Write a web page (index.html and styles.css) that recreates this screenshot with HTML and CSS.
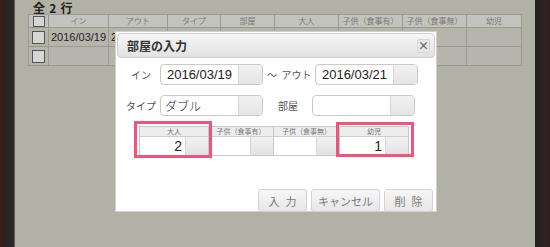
FILE: index.html
```html
<!DOCTYPE html>
<html lang="ja">
<head>
  <meta charset="UTF-8">
  <title>部屋の入力</title>
  <link rel="stylesheet" href="styles.css">
</head>
<body>
  <div class="frame">
    <div class="edge-left"></div>
    <main class="board">
      <div class="count">全 2 行</div>
      <table class="list">
        <tr class="head">
          <td class="c-chk"><span class="chk"></span></td>
          <td>イン</td>
          <td>アウト</td>
          <td>タイプ</td>
          <td>部屋</td>
          <td>大人</td>
          <td>子供（食事有）</td>
          <td>子供（食事無）</td>
          <td>幼児</td>
        </tr>
        <tr>
          <td class="c-chk"><span class="chk"></span></td>
          <td>2016/03/19</td>
          <td>2016/03/21</td>
          <td>ダブル</td>
          <td></td>
          <td></td>
          <td></td>
          <td></td>
          <td></td>
        </tr>
        <tr>
          <td class="c-chk"><span class="chk"></span></td>
          <td></td><td></td><td></td><td></td><td></td><td></td><td></td><td></td>
        </tr>
      </table>
    </main>
    <div class="edge-right"></div>
  </div>

  <div class="dialog">
    <div class="dialog-head">
      <span class="dialog-title">部屋の入力</span>
      <span class="close">×</span>
    </div>

    <div class="row row-dates">
      <label class="lbl">イン</label>
      <div class="field">
        <span class="field-text center">2016/03/19</span>
        <span class="field-btn"></span>
      </div>
      <label class="lbl2 lbl2-out">〜&nbsp;&nbsp;アウト</label>
      <div class="field">
        <span class="field-text center">2016/03/21</span>
        <span class="field-btn"></span>
      </div>
    </div>

    <div class="row row-room">
      <label class="lbl">タイプ</label>
      <div class="field">
        <span class="field-text jp">ダブル</span>
        <span class="field-btn"></span>
      </div>
      <label class="lbl2 lbl2-room">部屋</label>
      <div class="field">
        <span class="field-text"></span>
        <span class="field-btn"></span>
      </div>
    </div>

    <div class="people">
      <div class="pcell w-adult">
        <div class="pcell-head">大人</div>
        <div class="pcell-body"><span class="num">2</span><span class="num-btn"></span></div>
      </div>
      <div class="pcell w-child1">
        <div class="pcell-head">子供（食事有）</div>
        <div class="pcell-body"><span class="num"></span><span class="num-btn"></span></div>
      </div>
      <div class="pcell w-child2">
        <div class="pcell-head">子供（食事無）</div>
        <div class="pcell-body"><span class="num"></span><span class="num-btn"></span></div>
      </div>
      <div class="pcell w-infant">
        <div class="pcell-head">幼児</div>
        <div class="pcell-body"><span class="num">1</span><span class="num-btn"></span></div>
      </div>
    </div>

    <div class="actions">
      <button class="btn btn-short spaced">入力</button>
      <button class="btn btn-long">キャンセル</button>
      <button class="btn btn-short spaced">削除</button>
    </div>

    <div class="mark mark-adult"></div>
    <div class="mark mark-infant"></div>
  </div>
</body>
</html>
```

FILE: styles.css
```css
body { margin: 0; font-family: "Noto Sans CJK JP", "DejaVu Sans", sans-serif; }
.frame { display: flex; height: 247px; width: 550px; overflow: hidden; }
.edge-left { width: 14px; background: linear-gradient(to right, #3b1f16 0, #3b1f16 3px, #262324 4px, #2b2828 13px); border-right: 1px solid #5a5855; }
.edge-right { width: 15px; background: linear-gradient(to right, #242121 0, #2c2424 10px, #3a1c14 15px); }
.board { flex: 1; background: #b2b1a6; padding: 1px 0 0 13px; }
.count { font-size: 12px; font-weight: bold; line-height: 13px; height: 13px; padding-left: 5px; color: #222; word-spacing: 1.5px; }

.list { border-collapse: collapse; width: 494px; table-layout: fixed; }
.list td { border: 1px solid #9a9a94; height: 18px; padding: 0 2px; font-family: "Liberation Sans", "Noto Sans CJK JP", sans-serif; font-size: 11px; line-height: 17px; color: #222; white-space: nowrap; overflow: hidden; background: #b6b5ac; }
.list .head td { height: 12px; background: #c3c3bd; color: #7a7a76; font-family: "Noto Sans CJK JP", sans-serif; font-size: 8px; line-height: 12px; text-align: center; padding: 0; }
.list td.c-chk { width: 19px; padding: 0; text-align: center; }
.list td:nth-child(2) { width: 59px; }
.list td:nth-child(3) { width: 58px; }
.list td:nth-child(4) { width: 52px; }
.list td:nth-child(5) { width: 53px; }
.list td:nth-child(6), .list td:nth-child(7), .list td:nth-child(8) { width: 63px; }
.chk { display: inline-block; width: 11px; height: 11px; border: 1px solid #555; background: #d6d6d2; vertical-align: middle; }
.head .chk { width: 10px; height: 9px; }

.dialog { position: absolute; left: 115px; top: 31px; width: 322px; height: 181px; box-sizing: border-box; padding: 1px; background: #fff; border: 1px solid #d0d0cc; }
.dialog-head { height: 25px; box-sizing: border-box; border: 1px solid #cfcfcf; border-radius: 4px; background: linear-gradient(#f6f6f6, #e2e2e2); display: flex; align-items: center; justify-content: space-between; padding: 0 4px 0 9px; }
.dialog-title { font-size: 12px; font-weight: bold; color: #333; }
.close { width: 11px; height: 12px; line-height: 11px; text-align: center; font-size: 11px; font-weight: bold; color: #666; background: #e6e6e6; border: 1px solid #d6d6d6; border-radius: 2px; }

.row { display: flex; align-items: center; padding-left: 5px; height: 21px; }
.row-dates { margin-top: 6px; }
.row-room { margin-top: 10px; }
.lbl { width: 38px; text-align: center; font-size: 10px; color: #555; }
.lbl2 { font-size: 10px; color: #555; box-sizing: border-box; }
.lbl2-out { width: 52px; padding-left: 4px; }
.lbl2-room { width: 49px; padding-left: 15px; }
.field { display: flex; width: 103px; height: 21px; box-sizing: border-box; border: 1px solid #c9c9c9; border-radius: 4px; overflow: hidden; }
.field-text { flex: 1; font-family: "Liberation Sans", sans-serif; font-size: 13px; line-height: 19px; color: #222; padding-left: 4px; }
.field-text.center { text-align: center; padding-left: 0; }
.field-text.jp { font-family: "Noto Sans CJK JP", sans-serif; font-size: 12px; font-weight: 300; }
.field-btn { width: 23px; border-left: 1px solid #d6d6d6; background: linear-gradient(#f2f2f2, #e4e4e4); }

.people { display: flex; margin: 10px 0 0 22px; width: 270px; border: 1px solid #c8c8c8; box-sizing: border-box; }
.pcell { display: flex; flex-direction: column; border-right: 1px solid #c8c8c8; box-sizing: border-box; }
.pcell:last-child { border-right: 0; }
.w-adult { width: 69px; }
.w-child1 { width: 65px; }
.w-child2 { width: 66px; }
.w-infant { width: 68px; }
.pcell-head { height: 9px; line-height: 9px; font-size: 7px; text-align: center; color: #777; background: #ededed; border-bottom: 1px solid #cfcfcf; white-space: nowrap; overflow: hidden; }
.pcell-body { display: flex; height: 18px; }
.num { flex: 1; text-align: right; font-family: "Liberation Sans", sans-serif; font-size: 14px; line-height: 18px; color: #222; padding-right: 3px; }
.num-btn { width: 22px; border-left: 1px solid #d6d6d6; background: linear-gradient(#f2f2f2, #e2e2e2); }

.actions { display: flex; justify-content: flex-end; gap: 4px; margin-top: 33px; padding-right: 2px; }
.btn { height: 23px; box-sizing: border-box; border: 1px solid #d3d3d3; border-radius: 3px; background: linear-gradient(#f7f7f7, #e6e6e6); color: #7a7a7a; font-family: "Noto Sans CJK JP", sans-serif; font-size: 11px; padding: 0; }
.btn.spaced { letter-spacing: 6px; text-indent: 6px; }
.btn-short { width: 49px; }
.btn-long { width: 69px; }

.mark { position: absolute; border: 3px solid #ef5479; box-sizing: border-box; }
.mark-adult { left: 18px; top: 89px; width: 78px; height: 37px; }
.mark-infant { left: 220px; top: 90px; width: 78px; height: 35px; }
```
